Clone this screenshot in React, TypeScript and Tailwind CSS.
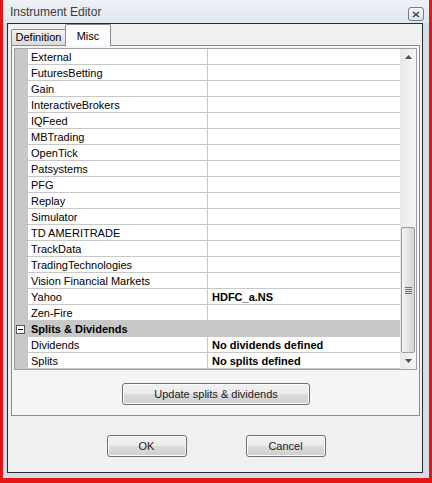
import React from "react";

// Instrument Editor dialog — Misc tab with the property grid

type Row = { name: string; value?: string; category?: boolean };

const ROWS: Row[] = [
  { name: "External" },
  { name: "FuturesBetting" },
  { name: "Gain" },
  { name: "InteractiveBrokers" },
  { name: "IQFeed" },
  { name: "MBTrading" },
  { name: "OpenTick" },
  { name: "Patsystems" },
  { name: "PFG" },
  { name: "Replay" },
  { name: "Simulator" },
  { name: "TD AMERITRADE" },
  { name: "TrackData" },
  { name: "TradingTechnologies" },
  { name: "Vision Financial Markets" },
  { name: "Yahoo", value: "HDFC_a.NS" },
  { name: "Zen-Fire" },
  { name: "Splits & Dividends", category: true },
  { name: "Dividends", value: "No dividends defined" },
  { name: "Splits", value: "No splits defined" },
];

function VistaButton({ label, className }: { label: string; className: string }) {
  return (
    <button
      type="button"
      className={`h-[22px] rounded-[3px] border border-[#707070] bg-[linear-gradient(to_bottom,#f2f2f2_0%,#ebebeb_50%,#dddddd_50%,#cfcfcf_100%)] text-[11px] text-[#1a1a1a] shadow-[inset_0_0_0_1px_#fcfcfc] ${className}`}
    >
      {label}
    </button>
  );
}

function GridRow({ row }: { row: Row }) {
  if (row.category) {
    return (
      <div className="flex h-[16px] bg-[#c8c8c8]">
        <div className="flex w-[13px] items-start pl-[1px] pt-[4px]">
          <div className="flex h-[9px] w-[9px] items-center justify-center border border-[#555] bg-white">
            <div className="h-px w-[5px] bg-black" />
          </div>
        </div>
        <div className="pl-[3px] text-[11px] font-bold leading-[16px] text-black">{row.name}</div>
      </div>
    );
  }
  return (
    <div className="flex h-[16px]">
      <div className="w-[13px] bg-[#c8c8c8]" />
      <div className="w-[179px] border-b border-[#c8c8c8] bg-white pl-[3px] text-[11px] leading-[16px] text-black whitespace-nowrap overflow-hidden">
        {row.name}
      </div>
      <div className="w-px bg-[#c8c8c8]" />
      <div className="w-[192px] border-b border-[#c8c8c8] bg-white pl-[4px] text-[11px] font-bold leading-[16px] text-black whitespace-nowrap overflow-hidden">
        {row.value ?? ""}
      </div>
    </div>
  );
}

function ScrollBar() {
  return (
    <div className="flex w-[16px] flex-col bg-[linear-gradient(to_right,#e9e9e9,#f5f5f5)]">
      <div className="flex h-[16px] items-center justify-center">
        <svg width="7" height="4" viewBox="0 0 7 4">
          <path d="M0 4 L3.5 0 L7 4 Z" fill="#4d4d4d" />
        </svg>
      </div>
      <div className="flex-1" />
      <div className="mx-[1px] flex h-[126px] items-center justify-center rounded-[2px] border border-[#9a9a9a] bg-[linear-gradient(to_right,#f4f4f4,#e4e4e4_50%,#d4d4d4)]">
        <div className="flex flex-col gap-[1px]">
          <div className="h-px w-[7px] bg-[#6f6f6f]" />
          <div className="h-px w-[7px] bg-[#6f6f6f]" />
          <div className="h-px w-[7px] bg-[#6f6f6f]" />
          <div className="h-px w-[7px] bg-[#6f6f6f]" />
        </div>
      </div>
      <div className="flex h-[16px] items-center justify-center">
        <svg width="7" height="4" viewBox="0 0 7 4">
          <path d="M0 0 L7 0 L3.5 4 Z" fill="#4d4d4d" />
        </svg>
      </div>
    </div>
  );
}

export default function App() {
  return (
    <div className="flex h-[483px] w-[432px] bg-[#e51515] px-[3px] pb-[5px] font-['Liberation_Sans',Arial,sans-serif]">
      {/* Window frame */}
      <div className="flex flex-1 flex-col bg-[#d3dde7]">
        {/* Title bar */}
        <div className="flex h-[23px] items-start bg-[linear-gradient(to_bottom,#eef2f6,#dfe7ee)] pl-[7px] pr-[5px]">
          <span className="mt-[5px] text-[12px] leading-[15px] text-[#3a3a3a]">Instrument Editor</span>
          <div className="ml-auto mt-[7px] flex h-[14px] w-[16px] items-center justify-center rounded-[3px] border border-[#6f8090] bg-[linear-gradient(to_bottom,#f4f7fa,#dde4ea)]">
            <svg width="8" height="7" viewBox="0 0 8 7">
              <path d="M1 1 L7 6 M7 1 L1 6" stroke="#3c4650" strokeWidth="1.6" />
            </svg>
          </div>
        </div>

        {/* Client area */}
        <div className="ml-[4px] mr-[6px] h-[450px] border border-[#2b2b2b] bg-[#f0f0f0]">
          {/* Tabs */}
          <div className="flex h-[21px] items-end pl-[3px]">
            <div className="flex h-[16px] w-[55px] items-center justify-center rounded-t-[2px] border border-b-0 border-[#898c95] bg-[linear-gradient(to_bottom,#f2f2f2,#dcdcdc)] text-[11px] text-black">
              Definition
            </div>
            <div className="relative z-10 -mb-px -ml-px flex h-[22px] w-[46px] items-start justify-center rounded-t-[2px] border border-b-0 border-[#898c95] bg-[#fcfcfc] pt-[3px] text-[11px] text-black">
              Misc
            </div>
          </div>

          {/* Tab page */}
          <div className="ml-[3px] flex h-[371px] w-[409px] flex-col border border-[#898c95] bg-[#f5f5f5] pl-[2px] pr-[1px] pt-[2px]">
            <div className="flex w-[403px] border border-[#a0a0a0] bg-white">
              <div className="flex w-[385px] flex-col">
                {ROWS.map((r) => (
                  <GridRow key={r.name} row={r} />
                ))}
              </div>
              <ScrollBar />
            </div>
            <div className="mt-[13px] flex justify-center">
              <VistaButton label="Update splits & dividends" className="w-[188px]" />
            </div>
          </div>

          {/* Dialog buttons */}
          <div className="mt-[19px] flex justify-center gap-[59px] pl-[2px]">
            <VistaButton label="OK" className="w-[80px]" />
            <VistaButton label="Cancel" className="w-[80px]" />
          </div>
        </div>
      </div>
    </div>
  );
}
